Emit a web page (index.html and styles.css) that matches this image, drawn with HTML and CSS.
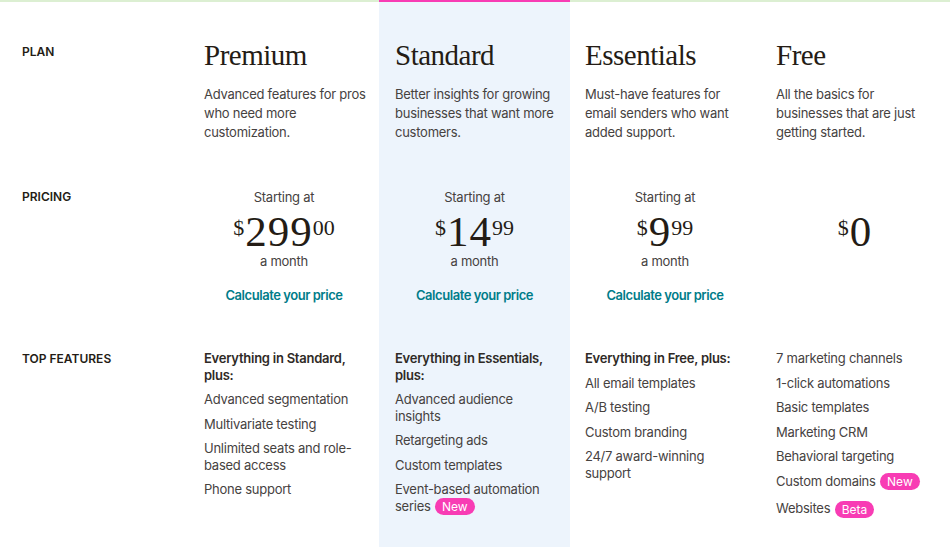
FILE: index.html
```html
<!DOCTYPE html>
<html lang="en">
<head>
<meta charset="utf-8">
<title>Plans</title>
<link rel="stylesheet" href="styles.css">
</head>
<body>
<div class="table">
  <!-- Row 1: plan -->
  <div class="cell top label-cell"><span class="label">Plan</span></div>
  <div class="cell top plan">
    <h2 class="name">Premium</h2>
    <p class="desc">Advanced features for pros who need more customization.</p>
  </div>
  <div class="cell top plan hl">
    <h2 class="name">Standard</h2>
    <p class="desc">Better insights for growing businesses that want more customers.</p>
  </div>
  <div class="cell top plan">
    <h2 class="name">Essentials</h2>
    <p class="desc">Must-have features for email senders who want added support.</p>
  </div>
  <div class="cell top plan last">
    <h2 class="name">Free</h2>
    <p class="desc">All the basics for businesses that are just getting started.</p>
  </div>

  <!-- Row 2: pricing -->
  <div class="cell label-cell mid"><span class="label">Pricing</span></div>
  <div class="cell price-cell">
    <div class="starting">Starting at</div>
    <div class="price"><span class="cur">$</span><span class="amt">299</span><span class="cents">00</span></div>
    <div class="per">a month</div>
    <a class="calc" href="#">Calculate your price</a>
  </div>
  <div class="cell price-cell hl">
    <div class="starting">Starting at</div>
    <div class="price"><span class="cur">$</span><span class="amt">14</span><span class="cents">99</span></div>
    <div class="per">a month</div>
    <a class="calc" href="#">Calculate your price</a>
  </div>
  <div class="cell price-cell">
    <div class="starting">Starting at</div>
    <div class="price"><span class="cur">$</span><span class="amt">9</span><span class="cents">99</span></div>
    <div class="per">a month</div>
    <a class="calc" href="#">Calculate your price</a>
  </div>
  <div class="cell price-cell last">
    <div class="starting hidden">Starting at</div>
    <div class="price"><span class="cur">$</span><span class="amt">0</span></div>
  </div>

  <!-- Row 3: features -->
  <div class="cell label-cell feat-label"><span class="label">Top features</span></div>
  <div class="cell features">
    <ul class="list">
      <li class="lead">Everything in Standard, plus:</li>
      <li>Advanced segmentation</li>
      <li>Multivariate testing</li>
      <li>Unlimited seats and role-based access</li>
      <li>Phone support</li>
    </ul>
  </div>
  <div class="cell features hl">
    <ul class="list">
      <li class="lead">Everything in Essentials, plus:</li>
      <li>Advanced audience insights</li>
      <li>Retargeting ads</li>
      <li>Custom templates</li>
      <li>Event-based automation series <span class="badge">New</span></li>
    </ul>
  </div>
  <div class="cell features">
    <ul class="list">
      <li class="lead">Everything in Free, plus:</li>
      <li>All email templates</li>
      <li>A/B testing</li>
      <li>Custom branding</li>
      <li>24/7 award-winning support</li>
    </ul>
  </div>
  <div class="cell features last">
    <ul class="list">
      <li>7 marketing channels</li>
      <li>1-click automations</li>
      <li>Basic templates</li>
      <li>Marketing CRM</li>
      <li>Behavioral targeting</li>
      <li class="has-badge">Custom domains <span class="badge">New</span></li>
      <li>Websites <span class="badge">Beta</span></li>
    </ul>
  </div>
</div>
</body>
</html>
```

FILE: styles.css
```css
* { box-sizing: border-box; }

html, body {
  margin: 0;
  padding: 0;
  background: #ffffff;
}

body {
  font-family: "Inter", "Liberation Sans", sans-serif;
  font-size: 13px;
  letter-spacing: -0.25px;
  color: #46423f;
  width: 950px;
  height: 547px;
  overflow: hidden;
}

.table {
  display: grid;
  grid-template-columns: 189px 190px 191px 190px 190px;
  grid-template-rows: 188px 160px 199px;
}

.cell {
  padding: 0 12px 0 15px;
}

.hl,
.last {
  padding-left: 16px;
}

.hl {
  background: #edf4fc;
}

.top {
  border-top: 2px solid #dcefd2;
  padding-top: 36px;
}

.top.hl {
  border-top-color: #f83cb4;
}

.label-cell {
  padding-left: 22px;
}

.label {
  display: block;
  font-size: 12px;
  line-height: 16px;
  font-weight: 600;
  text-transform: uppercase;
  color: #241c15;
  letter-spacing: 0;
}

.top.label-cell .label {
  margin-top: 6px;
}

.mid {
  padding-top: 1px;
}

.feat-label {
  padding-top: 3px;
}

.plan .name {
  margin: 0;
  font-family: "Liberation Serif", "Times New Roman", serif;
  font-weight: 400;
  font-size: 29px;
  line-height: 34px;
  letter-spacing: -0.5px;
  color: #241c15;
}

.plan .desc {
  margin: 13px 0 0;
  line-height: 19px;
}

.price-cell {
  display: flex;
  flex-direction: column;
  align-items: center;
  text-align: center;
  padding-left: 12px;
  padding-right: 12px;
}

.starting, .per {
  line-height: 19px;
}

.hidden {
  visibility: hidden;
}

.price {
  display: flex;
  align-items: flex-start;
  height: 40px;
  margin-top: 5px;
  color: #241c15;
  font-family: "Liberation Serif", "Times New Roman", serif;
  letter-spacing: 0;
}

.cur {
  font-size: 22px;
  line-height: 22px;
  margin-top: 5px;
  margin-right: 1px;
}

.amt {
  font-size: 43px;
  line-height: 40px;
  letter-spacing: 1px;
}

.cents {
  font-size: 22px;
  line-height: 22px;
  margin-top: 5px;
}

.calc {
  margin-top: 15px;
  font-weight: 600;
  line-height: 19px;
  letter-spacing: -0.45px;
  color: #007c89;
  text-decoration: none;
}

.features {
  padding-top: 2px;
}

.list {
  list-style: none;
  margin: 0;
  padding: 0;
}

.list li {
  line-height: 16.5px;
  margin-bottom: 8px;
}

.list li.lead {
  font-weight: 600;
  color: #2f2a26;
}

.list li.has-badge {
  margin-bottom: 10px;
}

.badge {
  display: inline-block;
  vertical-align: middle;
  height: 17px;
  line-height: 17px;
  padding: 0 7px;
  margin-left: 1px;
  border-radius: 9px;
  background: #f83cb4;
  color: #ffffff;
  font-size: 12px;
  letter-spacing: 0;
  position: relative;
  top: 0;
}
```
